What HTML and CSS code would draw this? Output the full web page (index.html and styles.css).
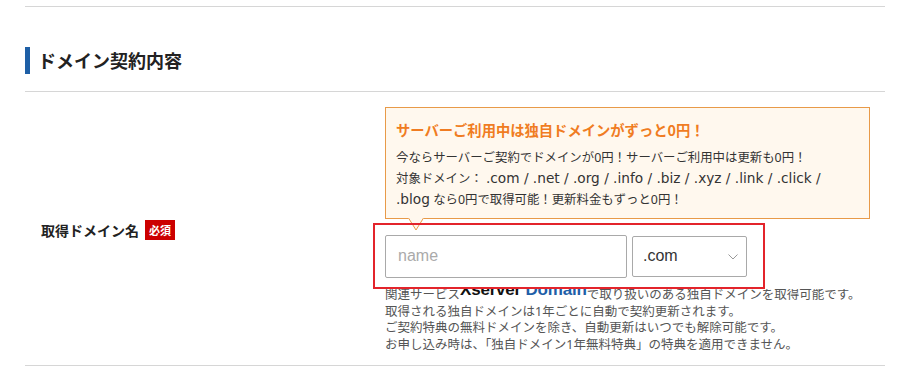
FILE: index.html
```html
<!DOCTYPE html>
<html lang="ja">
<head>
<meta charset="utf-8">
<title>ドメイン契約内容</title>
<link rel="stylesheet" href="styles.css">
</head>
<body>
<div class="wrap">
  <div class="rule"></div>
  <h2 class="sec-title">ドメイン契約内容</h2>
  <div class="row">
    <div class="label">取得ドメイン名<span class="badge">必須</span></div>
    <div class="field">
      <div class="tip">
        <p class="tip-title">サーバーご利用中は独自ドメインがずっと0円！</p>
        <p class="tip-body">今ならサーバーご契約でドメインが0円！サーバーご利用中は更新も0円！<br>対象ドメイン： <span class="lat">.com / .net / .org / .info / .biz / .xyz / .link / .click /</span><br><span class="lat">.blog</span> なら0円で取得可能！更新料金もずっと0円！</p>
        <svg class="tip-arrow" width="16" height="13" viewBox="0 0 16 13"><polygon points="0,0 8,12.5 16,0" fill="#fff8ee"/><polyline points="0.5,0 8,12 15.5,0" fill="none" stroke="#e89a48" stroke-width="1"/></svg>
      </div>
      <div class="inputs">
        <input class="name-input" type="text" placeholder="name">
        <div class="select">
          <span class="select-val">.com</span>
          <svg class="chev" width="10" height="6" viewBox="0 0 10 6"><polyline points="0.5,0.5 5,5 9.5,0.5" fill="none" stroke="#999" stroke-width="1"/></svg>
        </div>
      </div>
      <div class="note-clip">
        <p class="note">関連サービス<span class="logo"><b class="logo-x">Xserver</b> <b class="logo-d">Domain</b></span>で取り扱いのある独自ドメインを取得可能です。<br>取得される独自ドメインは1年ごとに自動で契約更新されます。<br>ご契約特典の無料ドメインを除き、自動更新はいつでも解除可能です。<br>お申し込み時は、「独自ドメイン1年無料特典」の特典を適用できません。</p>
      </div>
    </div>
  </div>
</div>
</body>
</html>
```
FILE: styles.css
```css
* { box-sizing: border-box; }
html, body { margin: 0; padding: 0; background: #fff; }
body {
  font-family: "Noto Sans", "Noto Sans CJK JP", sans-serif;
  color: #333;
}
.wrap {
  width: 860px;
  margin-left: 25px;
  padding-top: 6px;
}
.rule {
  height: 1px;
  background: #d6d6d6;
}
.sec-title {
  margin: 40px 0 17px;
  height: 27px;
  border-left: 5px solid #1e5fa6;
  padding-left: 8px;
  font-size: 18px;
  line-height: 27px;
  font-weight: bold;
  color: #222;
  font-family: "Noto Sans CJK JP", sans-serif;
}
.row {
  display: flex;
  align-items: center;
  border-top: 1px solid #d6d6d6;
  border-bottom: 1px solid #d6d6d6;
  padding: 15px 0 12px;
}
.label {
  width: 348px;
  padding-left: 16px;
  display: flex;
  align-items: center;
  gap: 6px;
  font-family: "Noto Sans CJK JP", sans-serif;
  font-size: 14px;
  font-weight: bold;
  color: #222;
}
.badge {
  display: inline-block;
  background: #cc0000;
  color: #fff;
  font-size: 11px;
  line-height: 20px;
  height: 20px;
  padding: 0 4px;
  font-weight: bold;
}
.field {
  flex: 1;
}
.tip {
  position: relative;
  margin-left: 12px;
  width: 485px;
  background: #fff8ee;
  border: 1px solid #e89a48;
  padding: 12px 10px 8px;
}
.tip-title {
  margin: 0 0 8px;
  font-family: "Noto Sans CJK JP", sans-serif;
  font-size: 14.3px;
  line-height: 20px;
  font-weight: bold;
  color: #f07c22;
  white-space: nowrap;
}
.tip-body {
  margin: 0;
  font-size: 12.4px;
  line-height: 20px;
  color: #333;
  white-space: nowrap;
}
.lat {
  font-family: "DejaVu Sans", "Noto Sans", sans-serif;
  font-size: 13.7px;
}
.tip-arrow {
  position: absolute;
  z-index: 2;
  left: 22px;
  bottom: -13px;
  display: block;
}
.inputs {
  position: relative;
  z-index: 3;
  margin-top: 4px;
  width: 392px;
  height: 66px;
  border: 2px solid #e3242b;
  padding: 0 0 0 10px;
  display: flex;
  align-items: center;
  gap: 5px;
}
.name-input {
  width: 242px;
  height: 43px;
  margin: 0;
  border: 1px solid #a9a9a9;
  border-radius: 2px;
  padding: 0 12px;
  font-family: "Liberation Sans", Arial, sans-serif;
  font-size: 16px;
  color: #333;
  background: #fff;
  outline: none;
}
.name-input::placeholder { color: #aaa; }
.select {
  width: 115px;
  height: 41px;
  border: 1px solid #a9a9a9;
  border-radius: 2px;
  background: #fff;
  display: flex;
  align-items: center;
  justify-content: space-between;
  padding: 0 8px 0 10px;
  font-family: "Liberation Sans", Arial, sans-serif;
  font-size: 16px;
  color: #333;
}
.chev { display: block; margin-top: 2px; }
.note-clip {
  overflow: hidden;
  margin-left: 12px;
}
.note {
  margin: -2px 0 0;
  font-size: 12.5px;
  line-height: 16.5px;
  color: #555;
  white-space: nowrap;
}
.logo {
  position: relative;
  top: -4px;
  font-family: "Liberation Sans", Arial, sans-serif;
  font-size: 17px;
  line-height: 12px;
  letter-spacing: -0.2px;
}
.logo-x { color: #111; }
.logo-d { color: #1f5fa8; }
```
